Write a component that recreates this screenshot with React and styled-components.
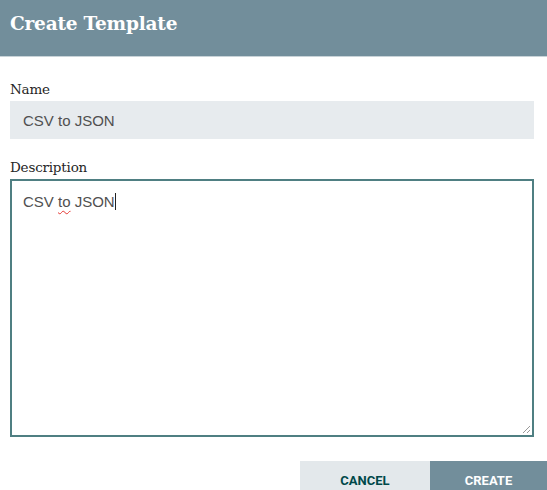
import React from "react";
import styled, { createGlobalStyle } from "styled-components";

const Global = createGlobalStyle`
  html, body { margin: 0; padding: 0; background: #fff; }
  body { width: 547px; height: 490px; overflow: hidden; }
  * { box-sizing: border-box; }
`;

const Dialog = styled.div`
  width: 547px;
  height: 490px;
  display: flex;
  flex-direction: column;
  background: #fff;
`;

const Header = styled.div`
  height: 57px;
  background: #728e9b;
  border-bottom: 1px solid #c8d3d8;
  padding: 13px 10px 0;
  font-family: "DejaVu Serif", "Liberation Serif", serif;
  font-weight: bold;
  font-size: 18.5px;
  color: #fff;
  letter-spacing: -0.2px;
`;

const Body = styled.div`
  display: flex;
  flex-direction: column;
  padding: 24px 13px 0 10px;
`;

const Label = styled.div`
  font-family: "DejaVu Serif", "Liberation Serif", serif;
  font-size: 13.5px;
  color: #262626;
  height: 20px;
  letter-spacing: -0.2px;
`;

const TextInput = styled.div`
  height: 38px;
  background: #e7ebee;
  padding: 0 13px;
  display: flex;
  align-items: center;
  font-family: "Liberation Sans", Arial, sans-serif;
  font-size: 15px;
  color: #505050;
  margin-bottom: 20px;
`;

const TextArea = styled.div`
  height: 258px;
  border: 2px solid #4f7f82;
  padding: 12px 11px;
  font-family: "Liberation Sans", Arial, sans-serif;
  font-size: 15px;
  color: #505050;
  position: relative;
`;

const Squiggle = styled.span`
  text-decoration: underline wavy #e53935;
  text-decoration-thickness: 1px;
  text-underline-offset: 3px;
`;

const Caret = styled.span`
  display: inline-block;
  width: 1px;
  height: 17px;
  background: #222;
  vertical-align: -3px;
`;

const Grip = styled.svg`
  position: absolute;
  right: 1px;
  bottom: 1px;
`;

const Footer = styled.div`
  margin-top: auto;
  display: flex;
  justify-content: flex-end;
`;

const Button = styled.div`
  width: ${(p) => p.$w}px;
  height: 29px;
  padding-top: 12px;
  text-align: center;
  font-family: Roboto, "Liberation Sans", sans-serif;
  font-weight: bold;
  font-size: 13px;
  text-transform: uppercase;
  background: ${(p) => (p.$primary ? "#728e9b" : "#e3e8eb")};
  color: ${(p) => (p.$primary ? "#fff" : "#004849")};
`;

export default function App() {
  return (
    <Dialog>
      <Global />
      <Header>Create Template</Header>
      <Body>
        <Label>Name</Label>
        <TextInput>CSV to JSON</TextInput>
        <Label>Description</Label>
        <TextArea>
          CSV <Squiggle>to</Squiggle> JSON<Caret />
          <Grip width="10" height="10" viewBox="0 0 10 10">
            <path d="M9 2 L2 9 M9 6 L6 9" stroke="#999" strokeWidth="1" />
          </Grip>
        </TextArea>
      </Body>
      <Footer>
        <Button $w={130}>Cancel</Button>
        <Button $w={117} $primary>Create</Button>
      </Footer>
    </Dialog>
  );
}
